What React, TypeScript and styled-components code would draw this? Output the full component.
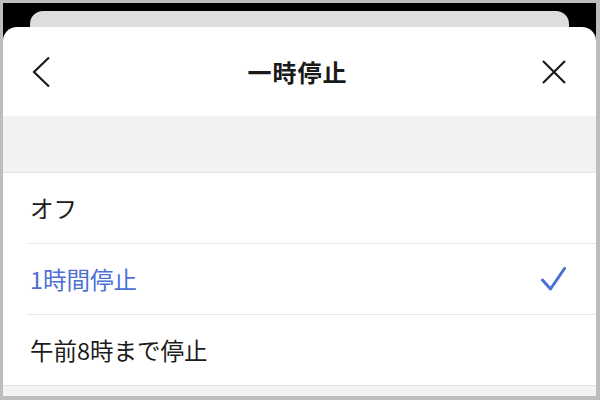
import React from 'react';
import styled, { createGlobalStyle } from 'styled-components';

const GlobalStyle = createGlobalStyle`
  html, body {
    margin: 0;
    padding: 0;
    background: #bfbfbf;
  }
  body {
    font-family: "Noto Sans CJK JP", "Noto Sans", sans-serif;
  }
`;

const Frame = styled.div`
  box-sizing: border-box;
  width: 600px;
  height: 400px;
  border-style: solid;
  border-color: #bdbdbd;
  border-width: 3px 4px 4px 3px;
  background: #000;
  display: flex;
  flex-direction: column;
  overflow: hidden;
`;

const BackSheet = styled.div`
  height: 16px;
  margin: 8px 27px 0;
  background: #dddddd;
  border-radius: 13px 13px 0 0;
`;

const Sheet = styled.div`
  flex: 1;
  background: #fff;
  border-radius: 14px 14px 0 0;
  display: flex;
  flex-direction: column;
  overflow: hidden;
`;

const Header = styled.header`
  height: 89px;
  display: grid;
  grid-template-columns: 60px 1fr 60px;
  align-items: center;
  padding: 0 30px 0 26px;
`;

const Title = styled.h1`
  margin: 0;
  text-align: center;
  font-size: 24px;
  font-weight: 700;
  color: #1a1a1a;
  letter-spacing: 1px;
`;

const IconButton = styled.button<{ $align: 'start' | 'end' }>`
  background: none;
  border: 0;
  padding: 0;
  display: flex;
  justify-content: ${({ $align }) => ($align === 'end' ? 'flex-end' : 'flex-start')};
  color: #1a1a1a;
`;

const Band = styled.div`
  height: 56px;
  background: #f2f2f2;
  border-bottom: 1px solid #e4e4e4;
`;

const List = styled.ul`
  list-style: none;
  margin: 0;
  padding: 0 0 0 24px;
`;

const Row = styled.li<{ $first?: boolean }>`
  height: 70px;
  display: flex;
  align-items: center;
  justify-content: space-between;
  padding: 0 30px 0 3px;
  border-top: ${({ $first }) => ($first ? 'none' : '1px solid #e6e6e6')};
`;

const Label = styled.span<{ $active?: boolean }>`
  font-size: 23.5px;
  color: ${({ $active }) => ($active ? '#4c70d6' : '#1c1c1c')};
`;

const Footer = styled.div`
  flex: 1;
  background: #f3f3f3;
  border-top: 1px solid #e2e2e2;
`;

const options = [
  { label: 'オフ', active: false },
  { label: '1時間停止', active: true },
  { label: '午前8時まで停止', active: false },
];

export default function App() {
  return (
    <>
      <GlobalStyle />
      <Frame>
        <BackSheet />
        <Sheet>
          <Header>
            <IconButton $align="start" aria-label="戻る">
              <svg width="24" height="32" viewBox="0 0 24 32" fill="none">
                <path d="M20 1.5 L5 16 L20 30.5" stroke="currentColor" strokeWidth="2.2" />
              </svg>
            </IconButton>
            <Title>一時停止</Title>
            <IconButton $align="end" aria-label="閉じる">
              <svg width="24" height="24" viewBox="0 0 24 24" fill="none">
                <path d="M1 1 L23 23 M23 1 L1 23" stroke="currentColor" strokeWidth="2.2" />
              </svg>
            </IconButton>
          </Header>
          <Band />
          <List>
            {options.map((o, i) => (
              <Row key={o.label} $first={i === 0}>
                <Label $active={o.active}>{o.label}</Label>
                {o.active && (
                  <svg width="25" height="25" viewBox="0 0 25 25" fill="none">
                    <path
                      d="M1.5 13 L9.5 22 L23.5 1.5"
                      stroke="#4c6fd4"
                      strokeWidth="3"
                      strokeLinecap="round"
                      strokeLinejoin="round"
                    />
                  </svg>
                )}
              </Row>
            ))}
          </List>
          <Footer />
        </Sheet>
      </Frame>
    </>
  );
}
